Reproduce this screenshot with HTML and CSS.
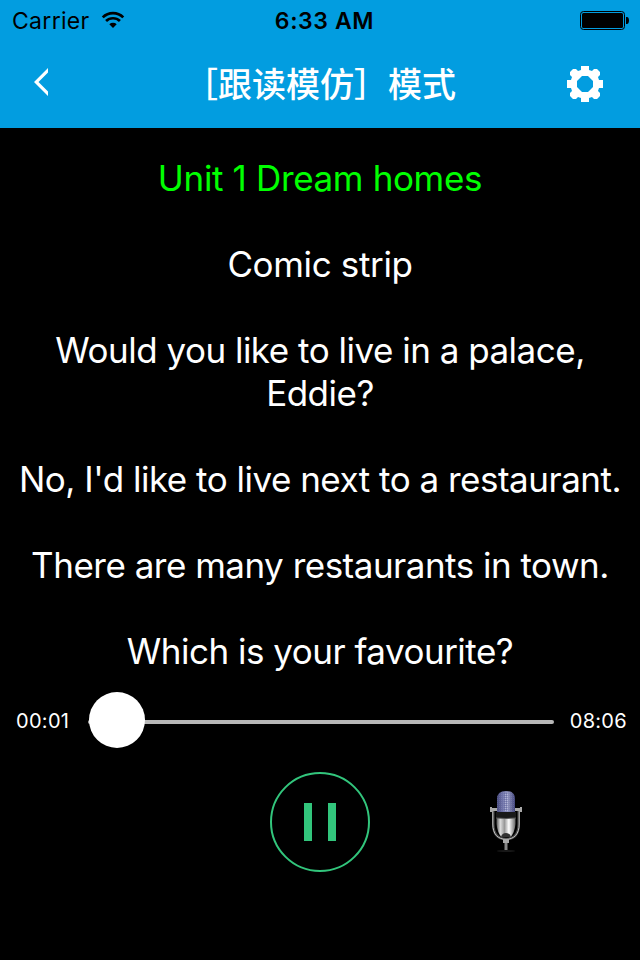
FILE: index.html
```html
<!DOCTYPE html>
<html lang="zh-CN">
  <head>
    <meta charset="UTF-8" />
    <meta name="viewport" content="width=device-width, initial-scale=1.0" />
    <title>［跟读模仿］模式</title>
    <link rel="stylesheet" href="styles.css">
  </head>
  <body>
    <header>
      <div class="status-bar">
        <div class="carrier">
          <span class="carrier-name">Carrier</span>
          <svg class="wifi" width="24" height="18" viewBox="0 0 26 20">
            <g fill="none" stroke="#000" stroke-width="3">
              <path d="M1.6 7.1a16.2 16.2 0 0 1 22.8 0" />
              <path d="M5.3 11.2a11 11 0 0 1 15.4 0" />
            </g>
            <path d="M13 19l-4.1-4.3a6 6 0 0 1 8.2 0z" />
          </svg>
        </div>
        <span class="clock">6:33 AM</span>
        <svg class="battery" width="49" height="20" viewBox="0 0 49 20">
          <rect x=".5" y=".5" width="44" height="18" rx="3" fill="none" stroke="#000" />
          <rect x="2" y="2" width="41" height="15" rx="1.5" />
          <path d="M46 6h1c1 0 2 1 2 3.5S48 13 47 13h-1z" />
        </svg>
      </div>
      <nav class="nav-bar">
        <svg class="back" width="16" height="30" viewBox="0 0 16 30">
          <path d="M0 15L14 1v4.4L4.5 15 14 24.6V29z" fill="#fff" />
        </svg>
        <h1>［跟读模仿］模式</h1>
        <svg class="settings" width="36" height="36" viewBox="0 0 36 36">
          <path fill="#fff" fill-rule="evenodd" d="M14 0h8v4l3 1 2-2h3l3 3v3l-2 2 1 3h4v8h-4l-1 3 2 2v3l-3 3h-3l-2-2-3 1v4h-8v-4l-3-1-2 2H6l-3-3v-3l2-2-1-3H0v-8h4l1-3-2-2V6l3-3h3l2 2 3-1zM15 10l-5 5v6l5 5h6l5-5v-6l-5-5z" />
        </svg>
      </nav>
    </header>

    <main class="lyrics">
      <p class="short current">Unit 1 Dream homes</p>
      <p class="short">Comic strip</p>
      <p>Would you like to live in a palace,<br>Eddie?</p>
      <p>No, I'd like to live next to a restaurant.</p>
      <p>There are many restaurants in town.</p>
      <p>Which is your favourite?</p>
    </main>

    <div class="progress">
      <span class="time">00:01</span>
      <div class="track">
        <div class="thumb"></div>
      </div>
      <span class="time total">08:06</span>
    </div>

    <div class="controls">
      <button class="pause" aria-label="Pause">
        <svg width="32" height="38" viewBox="0 0 32 38" fill="#32c57c">
          <rect width="8" height="38" />
          <rect x="24" width="8" height="38" />
        </svg>
      </button>
      <button class="record" aria-label="Record">
        <svg width="34" height="64" viewBox="0 0 34 64">
          <defs>
            <linearGradient id="head">
              <stop offset="0" stop-color="#45487c" />
              <stop offset=".3" stop-color="#6e72a8" />
              <stop offset=".6" stop-color="#9296c0" />
              <stop offset="1" stop-color="#40437a" />
            </linearGradient>
            <linearGradient id="body">
              <stop offset="0" stop-color="#555" />
              <stop offset=".2" stop-color="#ddd" />
              <stop offset=".42" stop-color="#999" />
              <stop offset=".65" stop-color="#fff" />
              <stop offset="1" stop-color="#666" />
            </linearGradient>
            <pattern id="mesh" width="2" height="2" patternUnits="userSpaceOnUse">
              <rect width="1" height="1" fill="#c5c8e4" />
              <rect x="1" y="1" width="1" height="1" fill="#5f639c" />
            </pattern>
          </defs>
          <!-- yoke -->
          <path d="M4.3 19v15c0 10 4.5 15 12.7 15s12.7-5 12.7-15V19" fill="none" stroke="#444" stroke-width="2.6" />
          <path d="M3.8 19v15c0 10 5 15.3 13.2 15.3S30.2 44 30.2 34V19" fill="none" stroke="#c4c4c4" stroke-width="1" />
          <path d="M1 17h2v5H1zM31 17h2v5h-2zM2 18h6v3H2zM26 18h6v3h-6z" fill="#aaa" />
          <!-- capsule -->
          <path d="M8 24V9q0-8 9-8t9 8v15z" fill="url(#head)" />
          <path d="M8 24V9q0-8 9-8t9 8v15z" fill="url(#mesh)" opacity=".15" />
          <path d="M15 3h4v18h-4z" fill="url(#mesh)" opacity=".6" />
          <path d="M7 22h20v6H7z" fill="#191919" />
          <path d="M7.5 28h19v6q-1 9-5 13h-9q-4-4-5-13z" fill="url(#body)" />
          <path d="M12 47q1-4 5-4t5 4z" fill="#333" />
          <path d="M7 28q10 1 20 0" fill="none" stroke="#555" />
          <!-- stem -->
          <path d="M14 49h6v4h-6z" fill="#aaa" />
          <path d="M15.5 53h3v7h-3z" fill="#888" />
          <ellipse cx="17" cy="61" rx="9" ry="1" fill="#181818" />
        </svg>
      </button>
    </div>
  </body>
</html>
```

FILE: styles.css
```css
* {
  box-sizing: border-box;
}
body {
  margin: 0;
  height: 960px;
  overflow: hidden;
  background-color: #000;
  color: #fff;
  font-family: Inter, "Noto Sans CJK SC", sans-serif;
}
header {
  height: 128px;
  background-color: #029de0;
}
.status-bar {
  height: 40px;
  padding: 2px 11px 0 12px;
  display: grid;
  grid-template-columns: 1fr auto 1fr;
  align-items: center;
  color: #000;
  font-size: 23px;
}
.carrier {
  display: flex;
  align-items: center;
  gap: 11px;
  letter-spacing: 0.3px;
}
.wifi {
  margin-top: -2px;
}
.battery {
  justify-self: end;
}
.clock {
  padding-left: 8px;
  font-weight: 600;
  letter-spacing: 0.6px;
}
.nav-bar {
  height: 88px;
  padding: 0 37px 0 34px;
  display: grid;
  grid-template-columns: 1fr auto 1fr;
  align-items: center;
}
.back {
  margin-top: -4px;
}
h1 {
  margin: -2px 0 0 3px;
  font-family: "Noto Sans CJK SC", sans-serif;
  font-size: 34px;
  font-weight: 500;
  line-height: 48px;
}
.settings {
  justify-self: end;
}
.lyrics {
  padding-top: 29px;
  display: flex;
  flex-direction: column;
  gap: 43px;
  text-align: center;
  font-size: 35px;
  line-height: 43px;
  letter-spacing: -0.5px;
  white-space: nowrap;
}
.lyrics p {
  margin: 0;
}
.lyrics .short {
  letter-spacing: -0.35px;
}
.lyrics .current {
  color: #0f0;
}
.progress {
  height: 56px;
  margin-top: 19px;
  padding: 0 13px 0 16px;
  display: flex;
  align-items: center;
}
.time {
  width: 72px;
  padding-top: 2px;
  font-size: 20px;
  letter-spacing: 0.3px;
}
.time.total {
  flex: 1;
  text-align: right;
}
.track {
  width: 466px;
  height: 4px;
  margin-top: 4px;
  border-radius: 2px;
  background-color: #b7b7b7;
  display: flex;
  align-items: center;
}
.thumb {
  flex: none;
  width: 56px;
  height: 56px;
  margin: -4px 0 0 1px;
  border-radius: 50%;
  background-color: #fff;
}
.controls {
  margin-top: 24px;
  padding: 0 117px;
  display: grid;
  grid-template-columns: 1fr auto 1fr;
  align-items: center;
}
.controls button {
  padding: 0;
  border: none;
  background: none;
  display: flex;
  align-items: center;
  justify-content: center;
}
.controls .pause {
  grid-column: 2;
  width: 100px;
  height: 100px;
  border: 2px solid #32c57c;
  border-radius: 50%;
}
.record {
  justify-self: end;
}
```
